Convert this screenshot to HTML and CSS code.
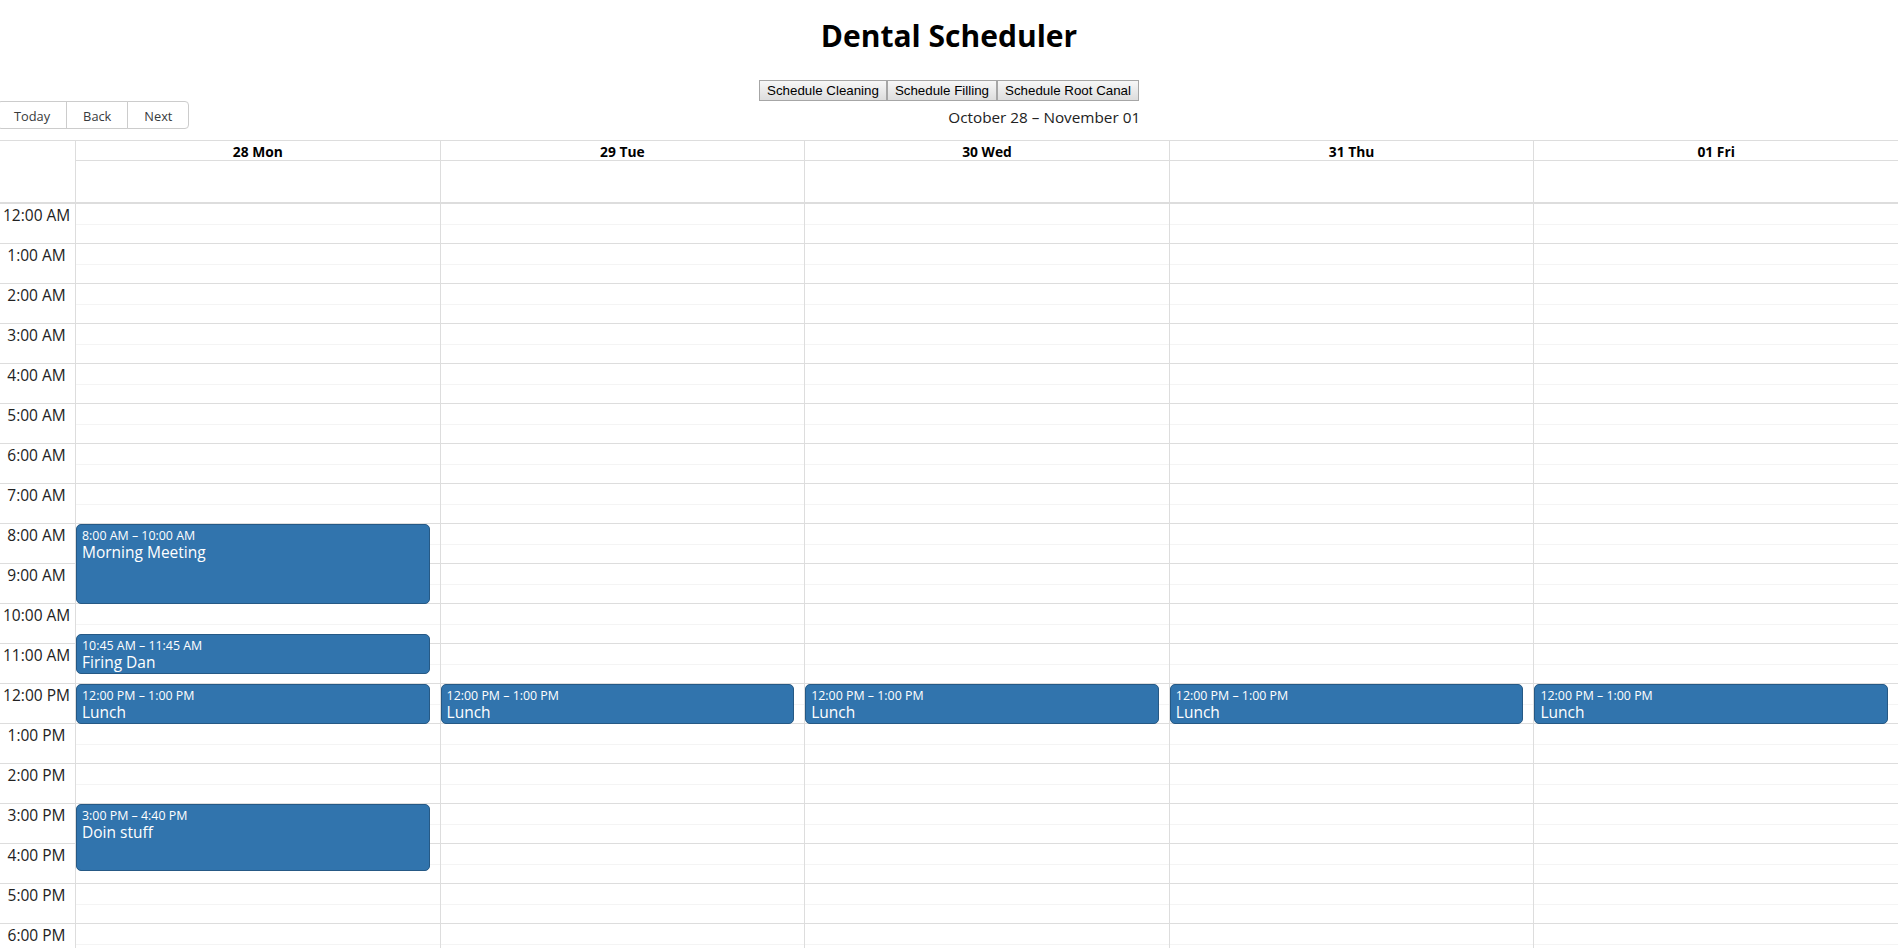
FILE: index.html
```html
<!DOCTYPE html>
<html lang="en">
<head>
<meta charset="utf-8">
<title>Dental Scheduler</title>
<link rel="stylesheet" href="styles.css">
</head>
<body>
<h1 class="title">Dental Scheduler</h1>
<div class="actions"><button class="action">Schedule Cleaning</button><button class="action">Schedule Filling</button><button class="action">Schedule Root Canal</button></div>
<div class="calendar">
  <div class="toolbar">
    <span class="btn-group"><button class="nav-btn">Today</button><button class="nav-btn">Back</button><button class="nav-btn">Next</button></span>
    <span class="toolbar-label">October 28 – November 01</span>
  </div>
  <div class="time-view">
    <div class="time-header">
      <div class="gutter-head"></div>
      <div class="day-head"><div class="head-cell">28 Mon</div><div class="allday-cell"></div></div>
      <div class="day-head"><div class="head-cell">29 Tue</div><div class="allday-cell"></div></div>
      <div class="day-head"><div class="head-cell">30 Wed</div><div class="allday-cell"></div></div>
      <div class="day-head"><div class="head-cell">31 Thu</div><div class="allday-cell"></div></div>
      <div class="day-head"><div class="head-cell">01 Fri</div><div class="allday-cell"></div></div>
    </div>
    <div class="time-content">
      <div class="gutter">
        <div class="group"><div class="slot label">12:00 AM</div><div class="slot"></div></div>
        <div class="group"><div class="slot label">1:00 AM</div><div class="slot"></div></div>
        <div class="group"><div class="slot label">2:00 AM</div><div class="slot"></div></div>
        <div class="group"><div class="slot label">3:00 AM</div><div class="slot"></div></div>
        <div class="group"><div class="slot label">4:00 AM</div><div class="slot"></div></div>
        <div class="group"><div class="slot label">5:00 AM</div><div class="slot"></div></div>
        <div class="group"><div class="slot label">6:00 AM</div><div class="slot"></div></div>
        <div class="group"><div class="slot label">7:00 AM</div><div class="slot"></div></div>
        <div class="group"><div class="slot label">8:00 AM</div><div class="slot"></div></div>
        <div class="group"><div class="slot label">9:00 AM</div><div class="slot"></div></div>
        <div class="group"><div class="slot label">10:00 AM</div><div class="slot"></div></div>
        <div class="group"><div class="slot label">11:00 AM</div><div class="slot"></div></div>
        <div class="group"><div class="slot label">12:00 PM</div><div class="slot"></div></div>
        <div class="group"><div class="slot label">1:00 PM</div><div class="slot"></div></div>
        <div class="group"><div class="slot label">2:00 PM</div><div class="slot"></div></div>
        <div class="group"><div class="slot label">3:00 PM</div><div class="slot"></div></div>
        <div class="group"><div class="slot label">4:00 PM</div><div class="slot"></div></div>
        <div class="group"><div class="slot label">5:00 PM</div><div class="slot"></div></div>
        <div class="group"><div class="slot label">6:00 PM</div><div class="slot"></div></div>
        <div class="group"><div class="slot label">7:00 PM</div><div class="slot"></div></div>
        <div class="group"><div class="slot label">8:00 PM</div><div class="slot"></div></div>
        <div class="group"><div class="slot label">9:00 PM</div><div class="slot"></div></div>
        <div class="group"><div class="slot label">10:00 PM</div><div class="slot"></div></div>
        <div class="group"><div class="slot label">11:00 PM</div><div class="slot"></div></div>
      </div>
      <div class="day-col" data-day="mon"></div>
      <div class="day-col" data-day="tue"></div>
      <div class="day-col" data-day="wed"></div>
      <div class="day-col" data-day="thu"></div>
      <div class="day-col" data-day="fri"></div>
    </div>
  </div>
</div>
<script src="app.js"></script>
</body>
</html>
```
FILE: app.js
```js
(function () {
  var events = {
    mon: [
      { start: 8 * 60, end: 10 * 60, label: "8:00 AM – 10:00 AM", title: "Morning Meeting" },
      { start: 10 * 60 + 45, end: 11 * 60 + 45, label: "10:45 AM – 11:45 AM", title: "Firing Dan" },
      { start: 12 * 60, end: 13 * 60, label: "12:00 PM – 1:00 PM", title: "Lunch" },
      { start: 15 * 60, end: 16 * 60 + 40, label: "3:00 PM – 4:40 PM", title: "Doin stuff" }
    ],
    tue: [{ start: 720, end: 780, label: "12:00 PM – 1:00 PM", title: "Lunch" }],
    wed: [{ start: 720, end: 780, label: "12:00 PM – 1:00 PM", title: "Lunch" }],
    thu: [{ start: 720, end: 780, label: "12:00 PM – 1:00 PM", title: "Lunch" }],
    fri: [{ start: 720, end: 780, label: "12:00 PM – 1:00 PM", title: "Lunch" }]
  };
  var PX_PER_MIN = 40 / 60;
  document.querySelectorAll(".day-col").forEach(function (col) {
    var html = "";
    for (var h = 0; h < 24; h++) {
      html += '<div class="group"><div class="slot"></div><div class="slot slot-half"></div></div>';
    }
    html += '<div class="events">';
    (events[col.dataset.day] || []).forEach(function (ev) {
      var top = ev.start * PX_PER_MIN;
      var height = (ev.end - ev.start) * PX_PER_MIN;
      html += '<div class="event" style="top:' + top + 'px;height:' + height + 'px">' +
        '<div class="event-label">' + ev.label + '</div>' +
        '<div class="event-title">' + ev.title + '</div></div>';
    });
    html += "</div>";
    col.innerHTML = html;
  });
})();
```
FILE: styles.css
```css
html, body {
  margin: 0;
  padding: 0;
  overflow: hidden;
  background: #fff;
}
body {
  font-family: "Open Sans", "Noto Sans", sans-serif;
  color: #222;
}
.title {
  margin: 16px 0 0;
  font-size: 30px;
  line-height: 40px;
  font-weight: 700;
  text-align: center;
  color: #000;
}
.actions {
  margin-top: 24px;
  display: flex;
  justify-content: center;
}
.action {
  font-family: "Liberation Sans", Arial, sans-serif;
  font-size: 13.3333px;
  line-height: 15px;
  color: #000;
  padding: 2px 7px;
  border: 1px solid #a6a6a6;
  border-radius: 0;
  background: linear-gradient(#f7f7f7, #dddddd);
  margin: 0;
}
.calendar {
  margin: 0 -1px 0 -3px;
}
.toolbar {
  display: flex;
  align-items: center;
  height: 28px;
  margin-bottom: 11px;
}
.btn-group {
  display: flex;
}
.nav-btn {
  font-family: "Open Sans", sans-serif;
  font-size: 12.8px;
  color: #373a3c;
  background: #fff;
  border: 1px solid #ccc;
  height: 28px;
  padding: 1px 16px 0;
  margin: 0;
  margin-left: -1px;
  line-height: 26px;
}
.nav-btn:first-child {
  margin-left: 0;
  border-radius: 4px 0 0 4px;
}
.nav-btn:last-child {
  border-radius: 0 4px 4px 0;
}
.toolbar-label {
  flex: 1;
  text-align: center;
  font-size: 15.3px;
  padding: 3px 10px 0;
  color: #222;
}
.time-view {
  border: 1px solid #ddd;
}
.time-header,
.time-content {
  display: grid;
  grid-template-columns: 77px repeat(5, 1fr);
}
.day-head {
  border-left: 1px solid #ddd;
}
.head-cell {
  height: 20px;
  box-sizing: border-box;
  border-bottom: 1px solid #ddd;
  text-align: center;
  font-weight: 700;
  font-size: 13.8px;
  line-height: 17px;
  padding-top: 2px;
  color: #000;
}
.allday-cell {
  height: 41px;
}
.time-content {
  border-top: 2px solid #ddd;
}
.group {
  height: 40px;
  box-sizing: border-box;
  border-bottom: 1px solid #ddd;
  display: flex;
  flex-direction: column;
}
.slot {
  height: 20px;
  flex: none;
}
.slot-half {
  flex: 1;
  height: auto;
  border-top: 1px solid #f4f4f4;
}
.label {
  text-align: center;
  font-size: 15.5px;
  line-height: 20px;
  padding: 1px 5px 0;
  white-space: nowrap;
  color: #222;
}
.day-col {
  border-left: 1px solid #ddd;
  position: relative;
}
.events {
  position: absolute;
  top: 0;
  bottom: 0;
  left: 0;
  right: 10px;
}
.event {
  position: absolute;
  left: 0;
  right: 0;
  box-sizing: border-box;
  background: #3174ad;
  border: 1px solid #265985;
  border-radius: 5px;
  color: #fff;
  padding: 2px 5px;
  overflow: hidden;
}
.event-label {
  font-size: 12.4px;
  line-height: 17px;
  white-space: nowrap;
}
.event-title {
  font-size: 15.5px;
  line-height: 16px;
}
```
